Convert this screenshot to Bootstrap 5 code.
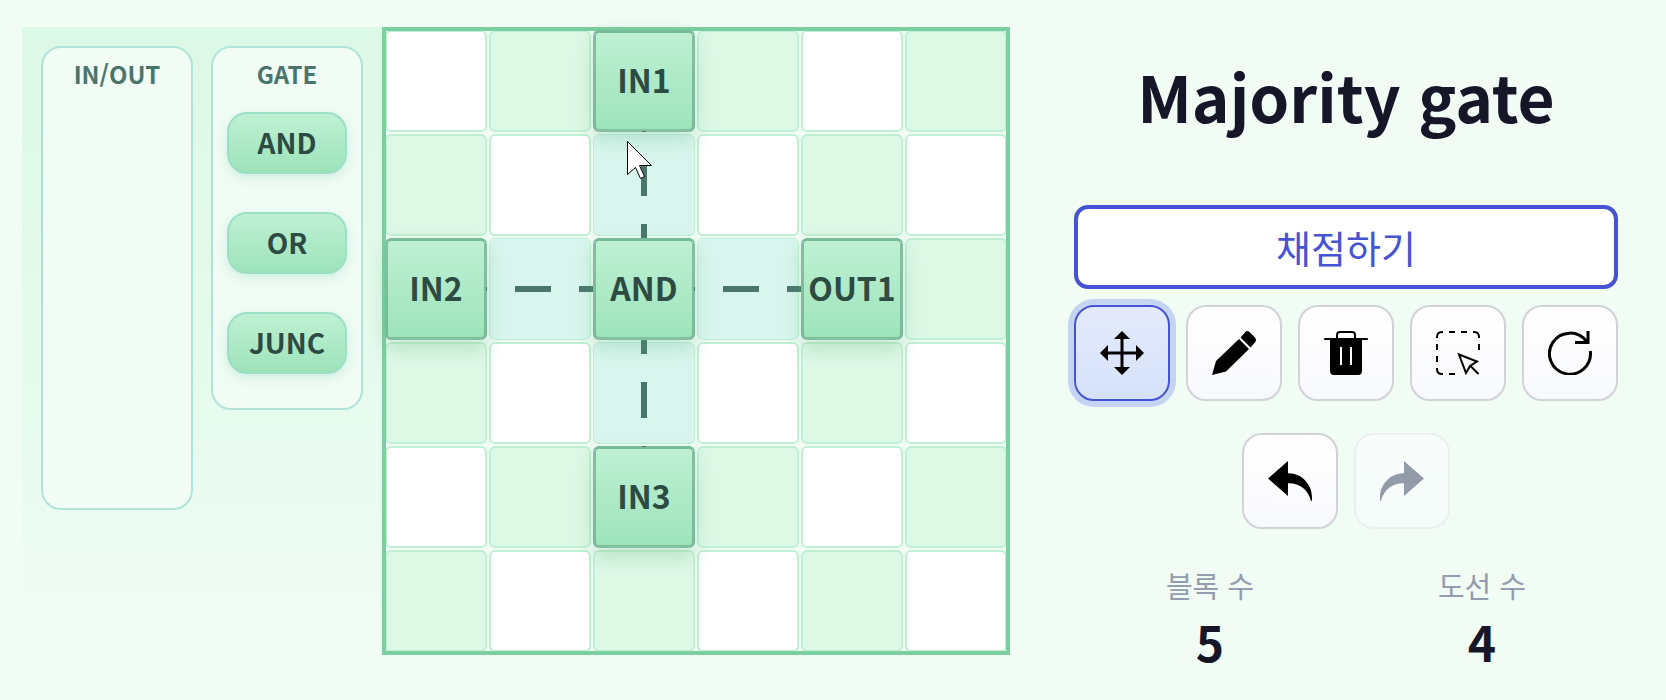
<!DOCTYPE html>
<html lang="ko">
<head>
<meta charset="utf-8">
<meta name="viewport" content="width=device-width, initial-scale=1">
<title>Majority gate</title>
<link href="https://cdn.jsdelivr.net/npm/bootstrap@5.3.0/dist/css/bootstrap.min.css" rel="stylesheet">
<style>
  body { background: #f1fcf5; color: #151729; font-family: "Noto Sans CJK KR", sans-serif; }
  .workspace { display: grid; grid-template-columns: 360fr 628fr 634fr; padding: 27px 22px; }
  .palette { padding: 19px; gap: 18px; background: linear-gradient(#dcf8e6, #e9fbf0 70%, #f1fcf5 93%); }
  .tray { flex: 1 1 0; border: 2px solid #b0e4d8; border-radius: 20px; background: #f1fcf5; padding: 0 14px; }
  .tray-io { height: 464px; }
  .tray-gate { height: 364px; }
  .tray h2 { font-size: 24px; line-height: 36px; font-weight: 700; color: #4a756c; margin: 8px 0 20px; }
  .gate-btn { width: 100%; height: 62px; margin-bottom: 38px; padding: 0 0 2px; font-size: 28px; font-weight: 700; line-height: 56px; color: #2d4a43;
    border: 2px solid #9be0c5; border-radius: 20px; background: linear-gradient(#bff1d4, #9de3ba); box-shadow: 0 4px 12px rgba(130,210,190,.3); }
  .board-area { padding: 2px; }
  .board { display: grid; grid-template-columns: repeat(6, 1fr); gap: 2px; padding: 1px; isolation: isolate; }
  .board::after { content: ""; position: absolute; inset: -2px; border: 4px solid #7bcfa1; pointer-events: none; }
  .cell { aspect-ratio: 1; border: 2px solid #c0f0d3; border-radius: 6px; background: #fff; }
  .cell-g { background: #def8e6; }
  .cell-w { background: #d9f6ee; border-width: 1px; }
  .block { position: relative; z-index: 2; aspect-ratio: 1; padding: 0 0 4px; border: 3px solid rgba(94,160,128,.6); border-radius: 6px;
    background: linear-gradient(#bff1d4, #9de3ba); box-shadow: 0 8px 20px rgba(90,180,130,.3); font-size: 32px; font-weight: 700; line-height: 40px; color: #2d4a43; white-space: nowrap; }
  .layer { position: absolute; inset: 0; width: 100%; height: 100%; pointer-events: none; }
  .layer-top { z-index: 3; }
  .controls { padding: 28px 26px 0 64px; }
  .controls h1 { font-size: 64px; line-height: 80px; font-weight: 700; margin-bottom: 70px; }
  .grade { height: 84px; border: 4px solid #4553d4; border-radius: 14px; background: #fff; color: #4553d4; font-size: 38px; line-height: 56px; padding: 0; }
  .tools { gap: 16px; margin-top: 16px; }
  .tools + .tools { margin-top: 32px; }
  .tool { width: 96px; height: 96px; padding: 0; border: 2px solid #d1d3d7; border-radius: 20px; background: linear-gradient(#fff, #f8f9fc); color: #000; display: flex; align-items: center; justify-content: center; }
  .tool svg { width: 44px; height: 44px; }
  .tool-on { border-color: #4553d4; background: linear-gradient(#e4eafb, #d6e2fb); box-shadow: 0 0 0 6px #c6d4f3; }
  .tool:disabled { border-color: #e9f0ef; background: linear-gradient(#f8fdfa, #f4fbf9); color: #929ca9; }
  .stats { margin: 36px 0 0; }
  .stats dt { font-size: 29px; line-height: 40px; font-weight: 400; color: #929dad; }
  .stats dd { font-size: 48px; line-height: 56px; font-weight: 700; margin: 8px 0 0; }
</style>
</head>
<body>
<main class="workspace">
  <aside class="palette d-flex align-items-start">
    <section class="tray tray-io text-center"><h2>IN/OUT</h2></section>
    <section class="tray tray-gate text-center">
      <h2>GATE</h2>
      <button type="button" class="gate-btn">AND</button>
      <button type="button" class="gate-btn">OR</button>
      <button type="button" class="gate-btn">JUNC</button>
    </section>
  </aside>

  <section class="board-area">
    <div class="board position-relative">
      <div class="cell"></div><div class="cell cell-g"></div><button type="button" class="block">IN1</button><div class="cell cell-g"></div><div class="cell"></div><div class="cell cell-g"></div>
      <div class="cell cell-g"></div><div class="cell"></div><div class="cell cell-w"></div><div class="cell"></div><div class="cell cell-g"></div><div class="cell"></div>
      <button type="button" class="block">IN2</button><div class="cell cell-w"></div><button type="button" class="block">AND</button><div class="cell cell-w"></div><button type="button" class="block">OUT1</button><div class="cell cell-g"></div>
      <div class="cell cell-g"></div><div class="cell"></div><div class="cell cell-w"></div><div class="cell"></div><div class="cell cell-g"></div><div class="cell"></div>
      <div class="cell"></div><div class="cell cell-g"></div><button type="button" class="block">IN3</button><div class="cell cell-g"></div><div class="cell"></div><div class="cell cell-g"></div>
      <div class="cell cell-g"></div><div class="cell"></div><div class="cell cell-g"></div><div class="cell"></div><div class="cell cell-g"></div><div class="cell"></div>
      <!-- wires -->
      <svg class="layer" viewBox="0 0 624 624" fill="none" stroke="#4a756c" stroke-width="6" stroke-dasharray="36 28" aria-hidden="true">
        <path d="M260 67V260"/><path d="M260 289V468"/><path d="M67 260H260"/><path d="M275 260H468"/>
      </svg>
      <!-- pointer, and the wire ends that show at the block edges -->
      <svg class="layer layer-top" viewBox="0 0 624 624" aria-hidden="true">
        <path d="M258 102.500H262M102.500 258V262M310.500 258V262M258 417.500H262" stroke="#4a756c"/>
        <path d="M243.500 112.500V145.500L251.500 138.500L256.500 149.500L260.500 147.500L255.500 136.500H267.500Z" fill="#fff" stroke="#000"/>
      </svg>
    </div>
  </section>

  <section class="controls text-center">
    <h1>Majority gate</h1>
    <button type="button" class="grade w-100">채점하기</button>
    <div class="tools d-flex justify-content-center">
      <button type="button" class="tool tool-on" aria-label="Move" aria-pressed="true">
        <svg viewBox="0 0 44 44" fill="currentColor"><path d="M22 0L30 8H23.500V20.500H36V14L44 22L36 30V23.500H23.500V36H30L22 44L14 36H20.500V23.500H8V30L0 22L8 14V20.500H20.500V8H14Z"/></svg>
      </button>
      <button type="button" class="tool" aria-label="Draw">
        <svg viewBox="0 0 44 44" fill="currentColor"><path d="M27 8L37 18L14 40.500L0 44L4 30Z"/><path d="M28.500 6.500L33 1.500Q35 -1 37.500 1L43 6.500Q45 9 43 11.500L38.500 16.500Z"/></svg>
      </button>
      <button type="button" class="tool" aria-label="Delete">
        <svg viewBox="0 0 44 44"><path d="M1 8H43M13 8V4Q13 1 16 1H28Q31 1 31 4V8" fill="none" stroke="currentColor" stroke-width="2" stroke-linecap="round"/><path fill="currentColor" fill-rule="evenodd" d="M6 7H38V40Q38 44 34 44H10Q6 44 6 40ZM16 16V34H18V16ZM26 16V34H28V16Z"/></svg>
      </button>
      <button type="button" class="tool" aria-label="Select">
        <svg viewBox="0 0 44 44" fill="none" stroke="currentColor" stroke-width="2"><path d="M1 7V6Q1 1 6 1H7M13 1H19M25 1H31M37 1H38Q43 1 43 6V7M1 13V19M1 25V31M1 37V38Q1 43 6 43H7M13 43H19M43 13V19"/><path d="M23 23.500L41 30.500L34 35L30 42ZM35 35.500L42.500 43"/></svg>
      </button>
      <button type="button" class="tool" aria-label="Reset">
        <svg viewBox="0 0 44 44" fill="none" stroke="currentColor" stroke-width="3"><path d="M42.300 20A20.500 20.500 0 1 1 38.500 10.500"/><path d="M27 11.500H40V0"/></svg>
      </button>
    </div>
    <div class="tools d-flex justify-content-center">
      <button type="button" class="tool" aria-label="Undo">
        <svg viewBox="0 0 44 44" fill="currentColor"><path d="M0 19.500L20 2V14.300C34 14 44 26 44 38V41.700H43C40 31 32 24 20 24.300V37Z"/></svg>
      </button>
      <button type="button" class="tool" aria-label="Redo" disabled>
        <svg viewBox="0 0 44 44" fill="currentColor"><path d="M44 19.500L24 2V14.300C10 14 0 26 0 38V41.700H1C4 31 12 24 24 24.300V37Z"/></svg>
      </button>
    </div>
    <div class="stats row g-0">
      <dl class="col-6 mb-0"><dt>블록 수</dt><dd>5</dd></dl>
      <dl class="col-6 mb-0"><dt>도선 수</dt><dd>4</dd></dl>
    </div>
  </section>
</main>
<script src="https://cdn.jsdelivr.net/npm/bootstrap@5.3.0/dist/js/bootstrap.bundle.min.js"></script>
</body>
</html>
